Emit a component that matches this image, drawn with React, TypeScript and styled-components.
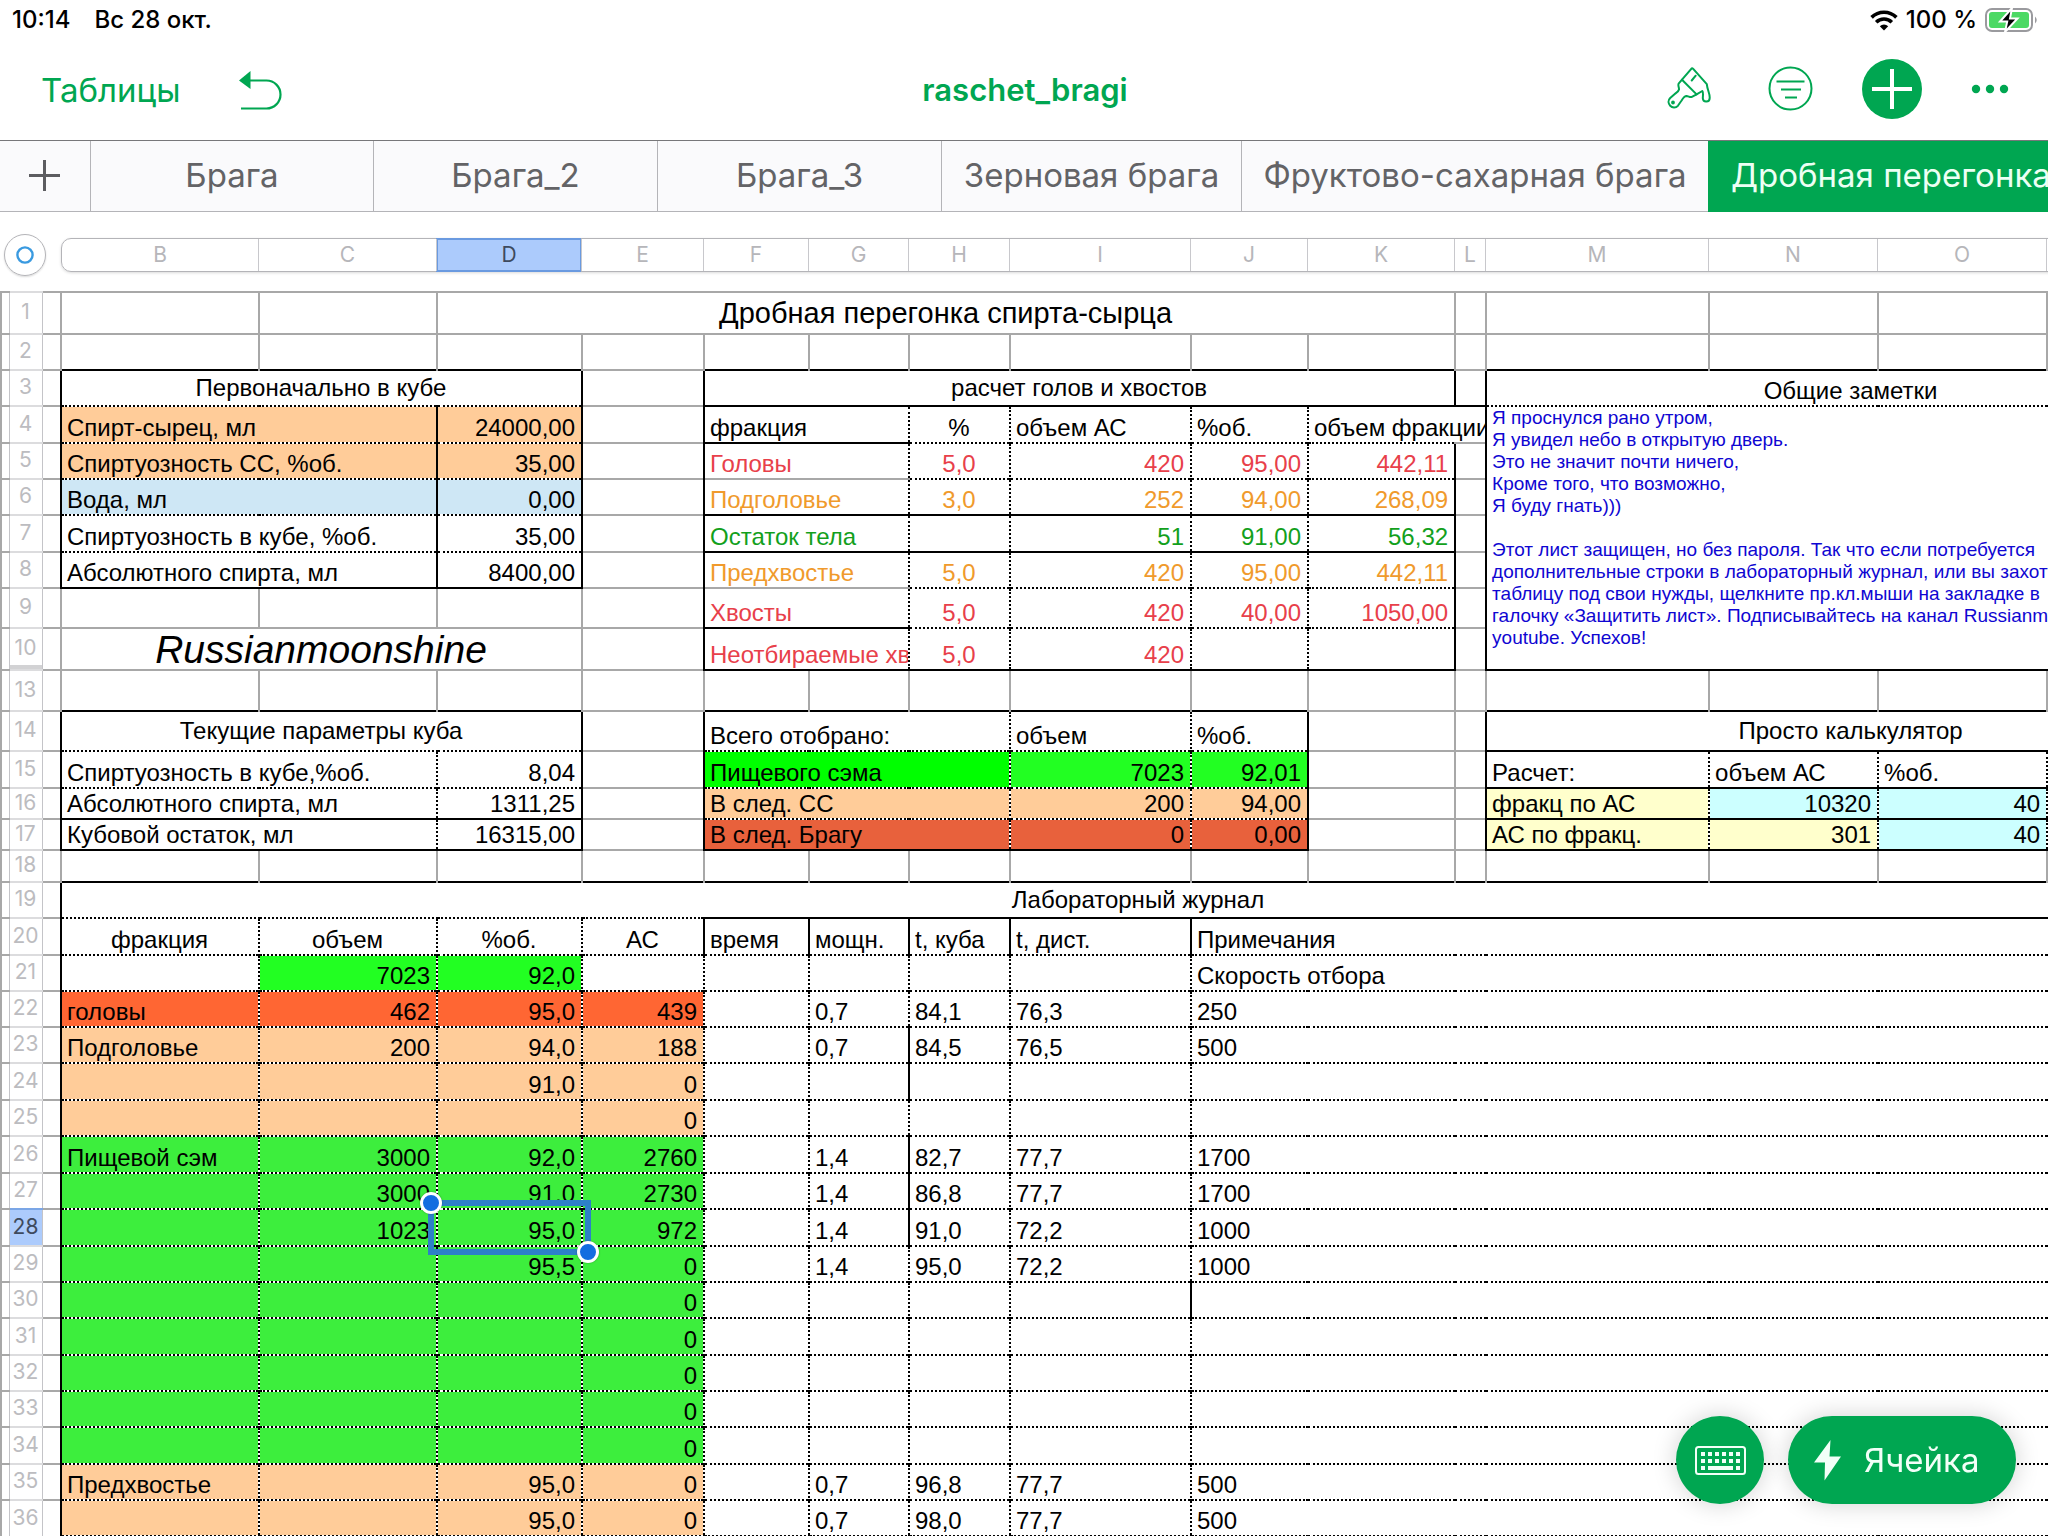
import React from "react";
import styled, { createGlobalStyle, css } from "styled-components";

const UI_FONT = `Inter, "Noto Sans", sans-serif`;
const SHEET_FONT = `"Liberation Sans", Arial, sans-serif`;
const GREEN = "#00a651";

const GlobalStyle = createGlobalStyle`
  *, *::before, *::after { box-sizing: border-box; }
  body { margin: 0; background: #fff; overflow: hidden; }
  button { font: inherit; margin: 0; padding: 0; border: 0; background: none; cursor: pointer; }
`;

/* ---------- shell ---------- */

const Screen = styled.div`
  display: flex;
  flex-direction: column;
  height: 100vh;
  overflow: hidden;
  font-family: ${UI_FONT};
`;

const StatusBar = styled.div`
  display: flex;
  justify-content: space-between;
  align-items: center;
  flex: none;
  height: 40px;
  padding: 0 8px 0 12px;
  font-size: 24px;
  font-weight: 500;
  line-height: 28px;
  color: #000;
`;

const StatusGroup = styled.div<{ $gap: number }>`
  display: flex;
  align-items: center;
  gap: ${(p) => p.$gap}px;
`;

const Toolbar = styled.header`
  display: grid;
  grid-template-columns: 1fr auto 1fr;
  align-items: center;
  flex: none;
  height: 100px;
  padding: 0 39px 0 41px;
`;

const ToolGroup = styled.div<{ $end?: boolean }>`
  display: flex;
  align-items: center;
  gap: ${(p) => (p.$end ? 49 : 59)}px;
  justify-content: ${(p) => (p.$end ? "flex-end" : "flex-start")};
  padding-bottom: ${(p) => (p.$end ? 3 : 0)}px;
`;

const TextButton = styled.button`
  font-size: 33px;
  line-height: 40px;
  color: ${GREEN};
`;

const IconButton = styled.button`
  display: flex;
  align-items: center;
  color: ${GREEN};
`;

const AddButton = styled(IconButton)`
  justify-content: center;
  width: 60px;
  height: 60px;
  border-radius: 50%;
  background: ${GREEN};
  color: #fff;
`;

const DocTitle = styled.h1`
  margin: 0;
  font-size: 31px;
  font-weight: 600;
  line-height: 40px;
  color: ${GREEN};
`;

const TabBar = styled.nav`
  display: flex;
  flex: none;
  height: 72px;
  overflow: hidden;
  border-top: 1px solid #77777a;
  background: #fafafc;
  box-shadow: inset 0 -1px #b4b4b8;
`;

const NewTab = styled.button`
  display: flex;
  align-items: center;
  justify-content: center;
  flex: none;
  width: 90px;
  padding: 0 2px 2px 0;
  color: #5c5c60;
`;

const Tab = styled.button<{ $active?: boolean; $width: number }>`
  flex: none;
  width: ${(p) => p.$width}px;
  border-left: 1px solid #b4b4b8;
  font-size: 33px;
  line-height: 40px;
  padding-bottom: 4px;
  white-space: nowrap;
  color: #636366;
  ${(p) =>
    p.$active &&
    css`
      background: ${GREEN};
      border-left-color: ${GREEN};
      color: #ecfff4;
      text-align: left;
      padding-left: 22px;
    `}
`;

/* ---------- column header ---------- */

const ColumnBar = styled.div`
  display: flex;
  align-items: center;
  flex: none;
  height: 79px;
  padding-top: 7px;
`;

const OriginSlot = styled.div`
  flex: none;
  width: 61px;
  padding-left: 4px;
`;

const OriginButton = styled.button`
  display: flex;
  align-items: center;
  justify-content: center;
  width: 42px;
  height: 42px;
  border: 1px solid #b4b4b8;
  border-radius: 50%;
  box-shadow: 0 1px 2px rgba(0, 0, 0, 0.15);
`;

const ColumnStrip = styled.div`
  display: flex;
  flex: none;
  height: 34px;
  border: 1px solid #b4b4b8;
  border-radius: 10px;
  box-shadow: 0 1px 3px rgba(0, 0, 0, 0.15);
`;

const ColumnLetter = styled.div<{ $width: number; $on?: boolean }>`
  flex: none;
  width: ${(p) => p.$width}px;
  font-size: 21px;
  line-height: 32px;
  text-align: center;
  color: #b6b6ba;
  & + & {
    border-left: 1px solid #c8c8cc;
  }
  ${(p) =>
    p.$on &&
    css`
      background: #accbfc;
      color: #3e4a5e;
      box-shadow: inset 0 0 0 1px #6a9ae0, 0 -1px #6a9ae0, 0 1px #6a9ae0;
    `}
`;

/* ---------- sheet ---------- */

const Sheet = styled.main`
  flex: 1;
  min-height: 0;
  overflow: hidden;
`;

const Table = styled.table`
  border-collapse: collapse;
  table-layout: fixed;
  width: 2215px;
  font-family: ${SHEET_FONT};
  font-size: 24px;
  line-height: 28px;
  color: #000;
`;

const Row = styled.tr<{ $height: number }>`
  height: ${(p) => p.$height}px;
`;

const Edge = styled.td`
  padding: 0;
  border-top: 2px solid #a8a8a8;
  &:first-child {
    border-left: 2px solid #a8a8a8;
  }
`;

const RowNumber = styled.th<{ $on?: boolean; $gapAfter?: boolean }>`
  padding: 0 0 2px;
  border-top: 2px solid ${(p) => (p.$on ? "#7ba6e6" : "#dcdcde")};
  border-left: 1px solid #c4c4c8;
  border-right: 1px solid #c4c4c8;
  font-family: ${UI_FONT};
  font-size: 21px;
  font-weight: 400;
  line-height: 24px;
  color: ${(p) => (p.$on ? "#3e4a5e" : "#bcbcc0")};
  background: ${(p) => (p.$on ? "#accbfc" : "#fff")};
  ${(p) => p.$gapAfter && "box-shadow: inset 0 -4px #d2d2d4;"}
`;

const LINES: Record<string, string> = {
  g: "2px solid #a8a8a8",
  k: "2px solid #000",
  d: "2px dotted #000",
  n: "0 none",
};

type Align = "left" | "center" | "right";
type VAlign = "top" | "middle" | "bottom";

const Cell = styled.td<{
  $top: string;
  $left: string;
  $bg?: string;
  $color?: string;
  $align: Align;
  $v: VAlign;
}>`
  position: relative;
  padding: 0 6px 0 5px;
  border-top: ${(p) => LINES[p.$top]};
  border-left: ${(p) => LINES[p.$left]};
  background: ${(p) => p.$bg ?? "transparent"};
  color: ${(p) => p.$color ?? "inherit"};
  text-align: ${(p) => p.$align};
  vertical-align: ${(p) => p.$v};
  white-space: nowrap;
  overflow: hidden;
  ${Row}:last-child > & {
    border-bottom: 2px dotted #000;
  }
`;

const SelectedCell = styled(Cell)`
  overflow: visible;
`;

const Heading = styled.div`
  font-size: 29px;
  line-height: 32px;
`;

const Brand = styled.div`
  font-size: 39px;
  font-style: italic;
  line-height: 38px;
`;

const Notes = styled.div`
  height: 100%;
  font-size: 19px;
  line-height: 22px;
  color: #0f06d2;
  white-space: pre;
`;

const SelectionFrame = styled.div`
  position: absolute;
  inset: -10px;
  z-index: 1;
  border: 6px solid #2d80c8;
`;

const Handle = styled.span<{ $end?: boolean }>`
  position: absolute;
  ${(p) => (p.$end ? "right: -14px; bottom: -14px;" : "left: -14px; top: -14px;")}
  width: 22px;
  height: 22px;
  border: 3px solid #fff;
  border-radius: 50%;
  background: #136de0;
  box-shadow: 0 0 2px rgba(0, 0, 0, 0.35);
`;

/* ---------- floating actions ---------- */

const Actions = styled.div`
  position: fixed;
  right: 32px;
  bottom: 32px;
  z-index: 2;
  display: flex;
  gap: 24px;
`;

const ActionButton = styled.button<{ $round?: boolean }>`
  display: flex;
  align-items: center;
  justify-content: ${(p) => (p.$round ? "center" : "flex-start")};
  gap: 23px;
  width: ${(p) => (p.$round ? 88 : 228)}px;
  height: 88px;
  padding-left: ${(p) => (p.$round ? 0 : 26)}px;
  border-radius: 44px;
  background: ${GREEN};
  color: #f2fff8;
  font-size: 33px;
  line-height: 40px;
  box-shadow: 0 0 24px rgba(0, 0, 0, 0.18);
`;

/* ---------- icons ---------- */

const WifiIcon = () => (
  <svg width="28" height="21" viewBox="0 0 28 21" aria-hidden="true" fill="none" stroke="#000" strokeWidth="3.6">
    <path d="M1.6 7.4a17.6 17.6 0 0 1 24.8 0" />
    <path d="M6.2 12.2a11 11 0 0 1 15.6 0" />
    <path d="M14 20.6l-4.2-4.3a6 6 0 0 1 8.4 0z" fill="#000" stroke="none" />
  </svg>
);

const BatteryIcon = () => (
  <svg width="55" height="26" viewBox="0 0 55 26" aria-hidden="true">
    <rect x="1" y="2" width="46" height="22" rx="6" fill="none" stroke="#9a9a9e" strokeWidth="2" />
    <rect x="4" y="5" width="40" height="16" rx="3" fill="#4cd964" />
    <path d="M50 9.500q3.500 3.500 0 7z" fill="#9a9a9e" />
    <path d="M27 1L15 14.600h7.200L20 25l12.500-13.600H25z" fill="#000" stroke="#fff" strokeWidth="2" />
  </svg>
);

const UndoIcon = () => (
  <svg width="43" height="39" viewBox="0 0 43 39" aria-hidden="true">
    <path d="M0 9.500L11.500 0v18z" fill="currentColor" />
    <path d="M10 9.500h17.500a14 14 0 0 1 0 28H2" fill="none" stroke="currentColor" strokeWidth="2.200" />
  </svg>
);

const BrushIcon = () => (
  <svg width="52" height="43" viewBox="0 0 52 43" aria-hidden="true" fill="none" stroke="currentColor" strokeWidth="2" strokeLinejoin="round" strokeLinecap="round">
    <path d="M24.700 1.400L15 12.700l-3.200 3.600c-1.300 2 .400 4.200.200 6.200-.3 1.900-2 2.900-4.500 4.700l-4.300 3.800c-2.700 2.700-1.700 6 0 7.800 2 2.200 5.500 2.600 7.700 0l3.500-5c1.600-2.600 2.800-4.600 5.200-4.700 1.900 0 3.400 1.700 5.300.8l4.700-2.500 5.700-3.400c1.200 1.200.6 4.300.5 7.300.3 4.600 6.800 4.300 6.900-.4.200-4.600-2.300-7.600-2.900-13.700L26.200 1.900c-.6-.6-1-.8-1.500-.5z" />
    <path d="M15 12.700l14.600 14.700M28.700 8.700l-4 4.800" />
    <circle cx="6" cy="35.500" r=".9" />
  </svg>
);

const FilterIcon = () => (
  <svg width="45" height="45" viewBox="0 0 45 45" aria-hidden="true" fill="none" stroke="currentColor" strokeWidth="2">
    <circle cx="22.500" cy="22.500" r="21" />
    <path d="M8.500 15.500h28M13 23.500h20M17 31.500h12" />
  </svg>
);

const PlusIcon = ({ size, width }: { size: number; width: number }) => (
  <svg width={size} height={size} viewBox={`0 0 ${size} ${size}`} aria-hidden="true" stroke="currentColor" strokeWidth={width}>
    <path d={`M${size / 2} 0v${size}M0 ${size / 2}h${size}`} />
  </svg>
);

const DotsIcon = () => (
  <svg width="38" height="10" viewBox="0 0 38 10" aria-hidden="true" fill="currentColor">
    <circle cx="5" cy="5" r="4.200" />
    <circle cx="19" cy="5" r="4.200" />
    <circle cx="33" cy="5" r="4.200" />
  </svg>
);

const RingIcon = () => (
  <svg width="18" height="18" viewBox="0 0 18 18" aria-hidden="true" fill="none" stroke="#3a9ae0" strokeWidth="2.4">
    <circle cx="9" cy="9" r="7.600" />
  </svg>
);

const KeyboardIcon = () => {
  const top = [0, 1, 2, 3, 4, 5].map((i) => 6 + i * 7);
  return (
    <svg width="51" height="29" viewBox="0 0 51 29" aria-hidden="true" fill="currentColor">
      <rect x="1" y="1" width="49" height="27" rx="2.500" fill="none" stroke="currentColor" strokeWidth="2" />
      {top.map((x) => (
        <React.Fragment key={x}>
          <rect x={x} y="6" width="4" height="4" />
          <rect x={x} y="13" width="4" height="4" />
        </React.Fragment>
      ))}
      <rect x="6" y="20" width="4" height="4" />
      <rect x="13" y="20" width="25" height="4" />
      <rect x="41" y="20" width="4" height="4" />
    </svg>
  );
};

const BoltIcon = () => (
  <svg width="27" height="41" viewBox="0 0 27 41" aria-hidden="true" fill="currentColor">
    <path d="M16.500 0L0 22.500h11L10.500 40.500 27 16.500H15.500z" />
  </svg>
);

/* ---------- data ---------- */

const COLUMNS: [string, number][] = [
  ["B", 198], ["C", 178], ["D", 145], ["E", 122], ["F", 105], ["G", 100], ["H", 101],
  ["I", 181], ["J", 117], ["K", 147], ["L", 31], ["M", 223], ["N", 169], ["O", 169], ["P", 168],
];

interface CellData {
  e: string; // top and left line codes
  t?: React.ReactNode;
  span?: number;
  rows?: number;
  bg?: string;
  c?: string;
  a?: Align;
  v?: VAlign;
  selected?: boolean;
}

interface RowData {
  n: number;
  h: number;
  cells: CellData[];
}

const cell = (e: string, t?: React.ReactNode, more: Partial<CellData> = {}): CellData => ({ e, t, ...more });
const blanks = (count: number, e: string): CellData[] => Array.from({ length: count }, () => cell(e));
const right = (e: string, t: string, more: Partial<CellData> = {}) => cell(e, t, { a: "right", ...more });
const title = (e: string, t: React.ReactNode, span: number, v: VAlign = "middle") =>
  cell(e, t, { span, a: "center", v });

const PEACH = "#ffcc99";
const SKY = "#cee7f5";
const LEAF = "#3dee3d";
const RED = "#e8404a";
const AMBER = "#f09a2c";
const FOREST = "#12a01c";

const NOTES = `Я проснулся рано утром,
Я увидел небо в открытую дверь.
Это не значит почти ничего,
Кроме того, что возможно,
Я буду гнать)))

Этот лист защищен, но без пароля. Так что если потребуется
дополнительные строки в лабораторный журнал, или вы захотите
таблицу под свои нужды, щелкните пр.кл.мыши на закладке в
галочку «Защитить лист». Подписывайтесь на канал Russianmoonshine
youtube. Успехов!`;

const fraction = (
  line: string,
  nameLine: string,
  color: string,
  name: string,
  pct: string,
  vol: string,
  abv: string,
  total: string,
): CellData[] => [
  cell(nameLine + "k", name, { span: 2, c: color }),
  cell(line + "d", pct, { a: "center", c: color }),
  right(line + "d", vol, { c: color }),
  right(line + "d", abv, { c: color }),
  right(line + "d", total, { c: color }),
  cell("gk"),
];

const taken = (line: string, name: string, vol: string, abv: string, bg: string, bg2 = bg): CellData[] => [
  cell("gk"),
  cell(line + "k", name, { span: 3, bg }),
  right(line + "d", vol, { bg: bg2 }),
  right(line + "d", abv, { bg: bg2 }),
  cell("gk"),
  cell("gg"),
];

interface LogEntry {
  n: number;
  h: number;
  bg?: string;
  v?: string[]; // B, C, D, E
  r?: string[]; // G, H, I, J
  solidH?: boolean;
  solidJ?: boolean;
}

const LOG: LogEntry[] = [
  { n: 22, h: 36, bg: "#ff6633", v: ["головы", "462", "95,0", "439"], r: ["0,7", "84,1", "76,3", "250"] },
  { n: 23, h: 36, bg: PEACH, v: ["Подголовье", "200", "94,0", "188"], r: ["0,7", "84,5", "76,5", "500"], solidH: true },
  { n: 24, h: 37, bg: PEACH, v: ["", "", "91,0", "0"], solidH: true },
  { n: 25, h: 36, bg: PEACH, v: ["", "", "", "0"] },
  { n: 26, h: 37, bg: LEAF, v: ["Пищевой сэм", "3000", "92,0", "2760"], r: ["1,4", "82,7", "77,7", "1700"], solidH: true },
  { n: 27, h: 36, bg: LEAF, v: ["", "3000", "91,0", "2730"], r: ["1,4", "86,8", "77,7", "1700"], solidH: true },
  { n: 28, h: 37, bg: LEAF, v: ["", "1023", "95,0", "972"], r: ["1,4", "91,0", "72,2", "1000"], solidH: true },
  { n: 29, h: 36, bg: LEAF, v: ["", "", "95,5", "0"], r: ["1,4", "95,0", "72,2", "1000"] },
  { n: 30, h: 36, bg: LEAF, v: ["", "", "", "0"], solidJ: true },
  { n: 31, h: 37, bg: LEAF, v: ["", "", "", "0"] },
  { n: 32, h: 36, bg: LEAF, v: ["", "", "", "0"] },
  { n: 33, h: 36, bg: LEAF, v: ["", "", "", "0"] },
  { n: 34, h: 37, bg: LEAF, v: ["", "", "", "0"] },
  { n: 35, h: 36, bg: PEACH, v: ["Предхвостье", "", "95,0", "0"], r: ["0,7", "96,8", "77,7", "500"] },
  { n: 36, h: 36, bg: PEACH, v: ["", "", "95,0", "0"], r: ["0,7", "98,0", "77,7", "500"] },
];

const logRow = ({ n, h, bg, v = [], r = [], solidH, solidJ }: LogEntry): RowData => ({
  n,
  h,
  cells: [
    cell("dk", v[0], { bg }),
    right("dd", v[1], { bg }),
    right("dd", v[2], { bg, selected: n === 28 }),
    right("dd", v[3], { bg }),
    cell("dd"),
    cell("dd", r[0]),
    cell(solidH ? "dk" : "dd", r[1]),
    cell("dd", r[2]),
    cell(solidJ ? "dk" : "dd", r[3], { span: 7 }),
  ],
});

const ROWS: RowData[] = [
  { n: 1, h: 42, cells: [...blanks(2, "gg"), title("gg", <Heading>Дробная перегонка спирта-сырца</Heading>, 8), ...blanks(5, "gg")] },
  { n: 2, h: 36, cells: blanks(15, "gg") },
  { n: 3, h: 36, cells: [title("kk", "Первоначально в кубе", 3), cell("gk"), title("kk", "расчет голов и хвостов", 6), cell("gk"), title("kk", "Общие заметки", 4, "bottom")] },
  {
    n: 4, h: 37, cells: [
      cell("dk", "Спирт-сырец, мл", { span: 2, bg: PEACH }), right("dk", "24000,00", { bg: PEACH }), cell("gk"),
      cell("kk", "фракция", { span: 2 }), cell("kd", "%", { a: "center" }), cell("kd", "объем АС"), cell("kd", "%об."),
      cell("kd", "объем фракции", { span: 2 }),
      cell("dk", <Notes>{NOTES}</Notes>, { span: 4, rows: 7, v: "top" }),
    ],
  },
  { n: 5, h: 36, cells: [cell("dk", "Спиртуозность СС, %об.", { span: 2, bg: PEACH }), right("dk", "35,00", { bg: PEACH }), cell("gk"), ...fraction("d", "k", RED, "Головы", "5,0", "420", "95,00", "442,11")] },
  { n: 6, h: 36, cells: [cell("dk", "Вода, мл", { span: 2, bg: SKY }), right("dk", "0,00", { bg: SKY }), cell("gk"), ...fraction("d", "g", AMBER, "Подголовье", "3,0", "252", "94,00", "268,09")] },
  { n: 7, h: 37, cells: [cell("dk", "Спиртуозность в кубе, %об.", { span: 2 }), right("dk", "35,00"), cell("gk"), ...fraction("k", "k", FOREST, "Остаток тела", "", "51", "91,00", "56,32")] },
  { n: 8, h: 36, cells: [cell("dk", "Абсолютного спирта, мл", { span: 2 }), right("dk", "8400,00"), cell("gk"), ...fraction("k", "k", AMBER, "Предхвостье", "5,0", "420", "95,00", "442,11")] },
  { n: 9, h: 40, cells: [...blanks(3, "kg"), cell("gg"), ...fraction("d", "g", RED, "Хвосты", "5,0", "420", "40,00", "1050,00")] },
  { n: 10, h: 42, cells: [title("gg", <Brand>Russianmoonshine</Brand>, 3, "bottom"), cell("gg"), ...fraction("d", "k", RED, "Неотбираемые хвосты", "5,0", "420", "", "")] },
  { n: 13, h: 41, cells: [...blanks(4, "gg"), ...blanks(6, "kg"), cell("gg"), ...blanks(4, "kg")] },
  { n: 14, h: 40, cells: [title("kk", "Текущие параметры куба", 3), cell("gk"), cell("kk", "Всего отобрано:", { span: 3 }), cell("kd", "объем"), cell("kd", "%об."), cell("gk"), cell("gg"), title("kk", "Просто калькулятор", 4)] },
  { n: 15, h: 37, cells: [cell("dk", "Спиртуозность в кубе,%об.", { span: 2 }), right("dd", "8,04"), ...taken("d", "Пищевого сэма", "7023", "92,01", "#00ff00", "#22ff22"), cell("kk", "Расчет:"), cell("kd", "объем АС"), cell("kd", "%об."), cell("kd")] },
  { n: 16, h: 31, cells: [cell("dk", "Абсолютного спирта, мл", { span: 2 }), right("dd", "1311,25"), ...taken("d", "В след. СС", "200", "94,00", PEACH), cell("kk", "фракц по АС", { bg: "#ffffcc" }), right("kd", "10320", { bg: "#ccffff" }), right("kd", "40", { bg: "#ccffff" }), cell("kd")] },
  { n: 17, h: 31, cells: [cell("kk", "Кубовой остаток, мл", { span: 2 }), right("kd", "16315,00"), ...taken("d", "В след. Брагу", "0", "0,00", "#e8613c"), cell("kk", "АС по фракц.", { bg: "#ffffcc" }), right("kd", "301", { bg: "#ffffcc" }), right("kd", "40", { bg: "#ccffff" }), cell("kd")] },
  { n: 18, h: 32, cells: [...blanks(3, "kg"), cell("gg"), ...blanks(5, "kg"), ...blanks(2, "gg"), ...blanks(4, "kg")] },
  { n: 19, h: 36, cells: [title("kk", "Лабораторный журнал", 15)] },
  {
    n: 20, h: 37, cells: [
      cell("dk", "фракция", { a: "center" }), cell("dd", "объем", { a: "center" }), cell("dd", "%об.", { a: "center" }), cell("dd", "АС", { a: "center" }),
      cell("kk", "время"), cell("kk", "мощн."), cell("kk", "t, куба"), cell("kk", "t, дист."), cell("kk", "Примечания", { span: 7 }),
    ],
  },
  { n: 21, h: 36, cells: [cell("dk"), right("dd", "7023", { bg: "#22ff22" }), right("dd", "92,0", { bg: "#22ff22" }), ...blanks(5, "dd"), cell("dd", "Скорость отбора", { span: 7 })] },
  ...LOG.map(logRow),
];

const TABS: [string, number][] = [
  ["Брага", 283],
  ["Брага_2", 284],
  ["Брага_3", 284],
  ["Зерновая брага", 300],
  ["Фруктово-сахарная брага", 467],
  ["Дробная перегонка", 380],
];

const SheetCell = ({ data }: { data: CellData }) => {
  const Box = data.selected ? SelectedCell : Cell;
  return (
    <Box
      $top={data.e[0]}
      $left={data.e[1]}
      $bg={data.bg}
      $color={data.c}
      $align={data.a ?? "left"}
      $v={data.v ?? "bottom"}
      colSpan={data.span}
      rowSpan={data.rows}
    >
      {data.t}
      {data.selected && (
        <SelectionFrame>
          <Handle />
          <Handle $end />
        </SelectionFrame>
      )}
    </Box>
  );
};

export default function App() {
  return (
    <Screen>
      <GlobalStyle />
      <StatusBar>
        <StatusGroup $gap={24}>
          <span>10:14</span>
          <span>Вс 28 окт.</span>
        </StatusGroup>
        <StatusGroup $gap={8}>
          <WifiIcon />
          <span>100 %</span>
          <BatteryIcon />
        </StatusGroup>
      </StatusBar>

      <Toolbar>
        <ToolGroup>
          <TextButton type="button">Таблицы</TextButton>
          <IconButton type="button" aria-label="Отменить"><UndoIcon /></IconButton>
        </ToolGroup>
        <DocTitle>raschet_bragi</DocTitle>
        <ToolGroup $end>
          <IconButton type="button" aria-label="Формат"><BrushIcon /></IconButton>
          <IconButton type="button" aria-label="Фильтр"><FilterIcon /></IconButton>
          <AddButton type="button" aria-label="Добавить"><PlusIcon size={40} width={4} /></AddButton>
          <IconButton type="button" aria-label="Ещё"><DotsIcon /></IconButton>
        </ToolGroup>
      </Toolbar>

      <TabBar>
        <NewTab type="button" aria-label="Новый лист"><PlusIcon size={31} width={3} /></NewTab>
        {TABS.map(([name, width], i) => (
          <Tab key={name} type="button" $width={width} $active={i === TABS.length - 1}>{name}</Tab>
        ))}
      </TabBar>

      <ColumnBar>
        <OriginSlot>
          <OriginButton type="button" aria-label="Выбрать таблицу"><RingIcon /></OriginButton>
        </OriginSlot>
        <ColumnStrip>
          {COLUMNS.map(([name, width], i) => (
            <ColumnLetter key={name} $width={i === 0 ? width - 2 : width} $on={name === "D"}>{name}</ColumnLetter>
          ))}
        </ColumnStrip>
      </ColumnBar>

      <Sheet>
        <Table>
          <colgroup>
            <col style={{ width: 8 }} />
            <col style={{ width: 33 }} />
            <col style={{ width: 19 }} />
            {COLUMNS.map(([name, width]) => (
              <col key={name} style={{ width }} />
            ))}
          </colgroup>
          <tbody>
            {ROWS.map((row) => (
              <Row key={row.n} $height={row.h}>
                <Edge />
                <RowNumber scope="row" $on={row.n === 28} $gapAfter={row.n === 10}>{row.n}</RowNumber>
                <Edge />
                {row.cells.map((data, i) => (
                  <SheetCell key={i} data={data} />
                ))}
              </Row>
            ))}
          </tbody>
        </Table>
      </Sheet>

      <Actions>
        <ActionButton type="button" $round aria-label="Клавиатура"><KeyboardIcon /></ActionButton>
        <ActionButton type="button">
          <BoltIcon />
          Ячейка
        </ActionButton>
      </Actions>
    </Screen>
  );
}
